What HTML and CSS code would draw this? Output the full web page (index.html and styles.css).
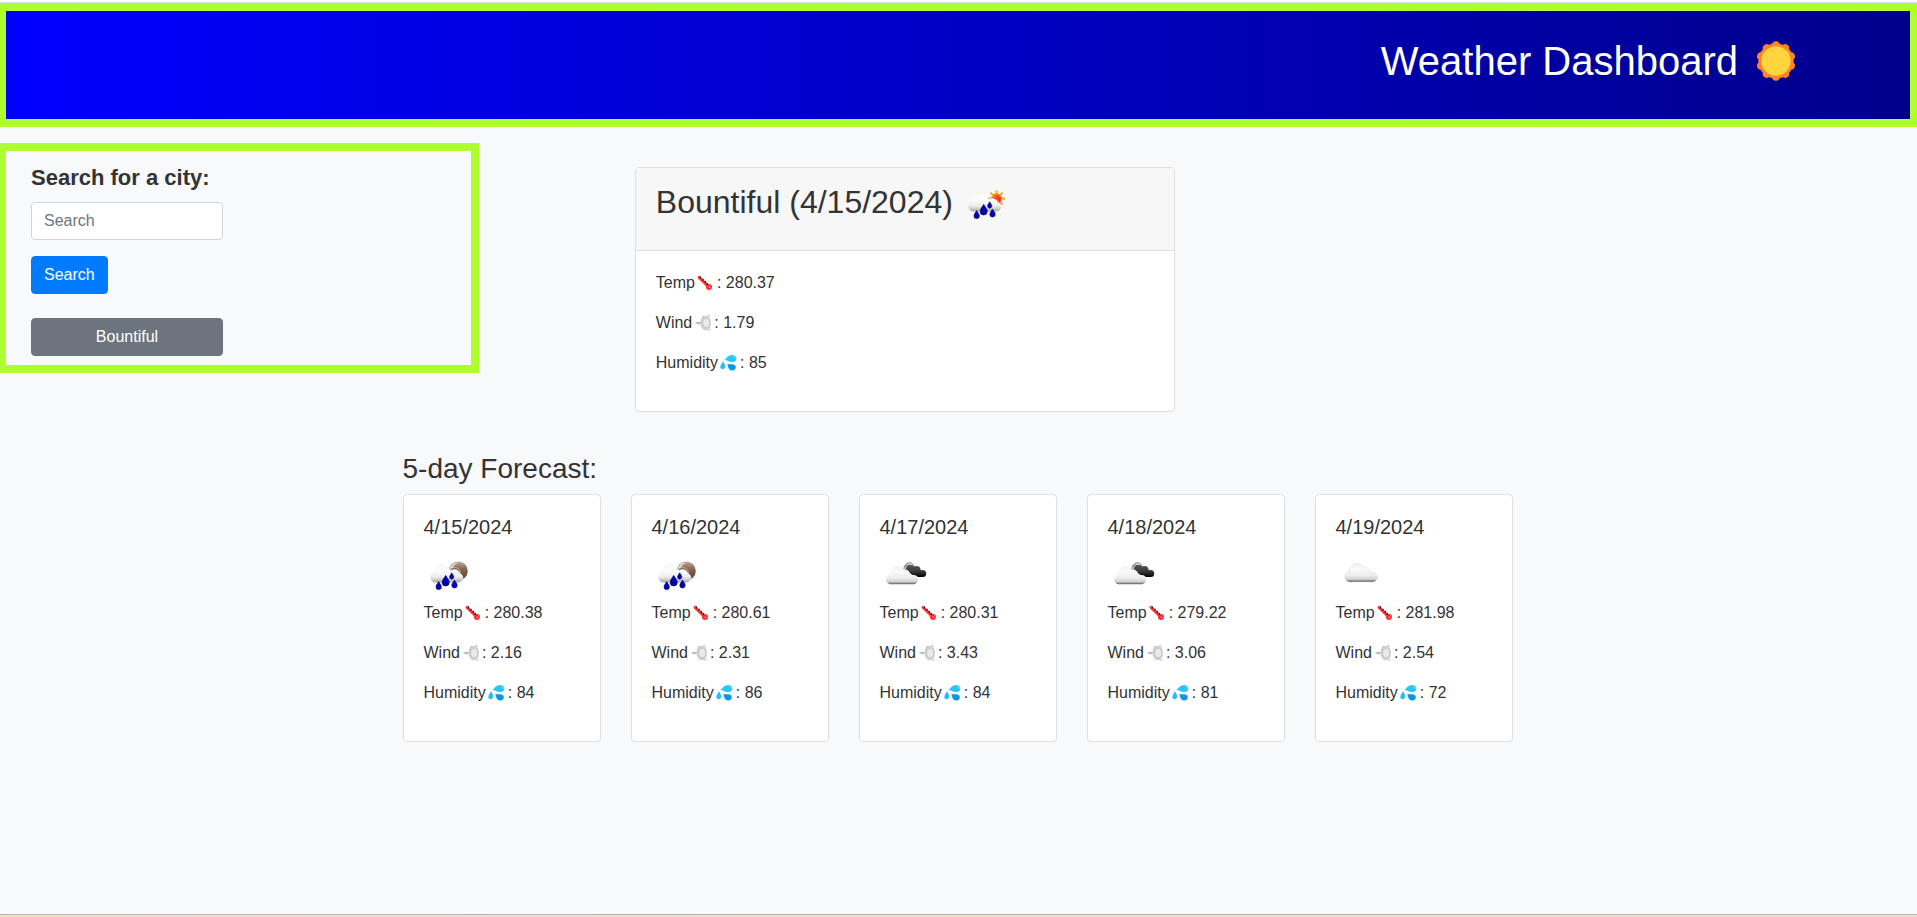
FILE: index.html
```html
<!DOCTYPE html>
<html lang="en">
<head>
<meta charset="utf-8">
<meta name="viewport" content="width=device-width, initial-scale=1">
<title>Weather Dashboard</title>
<link rel="stylesheet" href="styles.css">
</head>
<body>
<svg class="sprite" aria-hidden="true">
  <defs>
    <linearGradient id="white-cloud" gradientUnits="userSpaceOnUse" x1="0" y1="0" x2="0" y2="18.500">
      <stop offset="0" stop-color="#f1f1f1"/><stop offset=".3" stop-color="#fafafa"/><stop offset=".65" stop-color="#ededed"/><stop offset=".86" stop-color="#cfcfcf"/><stop offset=".95" stop-color="#777"/><stop offset="1" stop-color="#5a5a5a"/>
    </linearGradient>
    <linearGradient id="soft-cloud" gradientUnits="userSpaceOnUse" x1="0" y1="13" x2="0" y2="31.500">
      <stop offset="0" stop-color="#f6f6f6"/><stop offset=".35" stop-color="#fdfdfd"/><stop offset=".7" stop-color="#ededed"/><stop offset="1" stop-color="#a8a8a8"/>
    </linearGradient>
    <linearGradient id="dark-cloud" gradientUnits="userSpaceOnUse" x1="0" y1="12" x2="0" y2="26">
      <stop offset="0" stop-color="#5c5c5c"/><stop offset=".6" stop-color="#3a3a3a"/><stop offset="1" stop-color="#000"/>
    </linearGradient>
    <linearGradient id="moon" x1="0" y1="0" x2="0" y2="1">
      <stop offset="0" stop-color="#c2a896"/><stop offset=".35" stop-color="#8d6d57"/><stop offset=".7" stop-color="#6b4c38"/><stop offset="1" stop-color="#9b7f6c"/>
    </linearGradient>
    <radialGradient id="sun-core" cx=".5" cy=".7" r=".6">
      <stop offset="0" stop-color="#ff0000"/><stop offset=".6" stop-color="#ff3000"/><stop offset="1" stop-color="#ff7a00"/>
    </radialGradient>
    <path id="drop" d="M0-4C1-2 2.700-.6 2.700 1.300A2.700 2.700 0 0 1-2.700 1.300C-2.700-.6-1-2 0-4Z" fill="#0202b0" stroke="#000068" stroke-width=".6"/>
    <g id="rain">
      <g fill="url(#soft-cloud)">
        <circle cx="30.500" cy="24" r="5.800"/>
        <circle cx="34.500" cy="26.800" r="4.600"/>
        <rect x="20" y="24" width="14.500" height="7.400"/>
        <path d="M24.500 20.500A6.200 6.200 0 0 1 36.500 23" fill="none" stroke="#dadada" stroke-width=".6"/>
      </g>
      <g fill="url(#soft-cloud)">
        <circle cx="11.700" cy="26" r="5.500"/>
        <circle cx="17.500" cy="20.700" r="7.700"/>
        <circle cx="23.500" cy="22.500" r="5"/>
        <rect x="11.700" y="23" width="15" height="8.500"/>
      </g>
      <use href="#drop" transform="translate(14.700 34.600)"/>
      <use href="#drop" transform="translate(21.700 29.700) scale(1.300)"/>
      <use href="#drop" transform="translate(27.700 25) scale(.8)"/>
      <use href="#drop" transform="translate(30.500 33)"/>
    </g>
    <g id="cloud-shape">
      <circle cx="5.200" cy="13" r="5.200"/>
      <circle cx="11.500" cy="7.300" r="7"/>
      <circle cx="19" cy="8.500" r="5"/>
      <circle cx="23.500" cy="12" r="4"/>
      <circle cx="27.700" cy="13.600" r="4.600"/>
      <rect x="5.200" y="9" width="22.500" height="9.200"/>
    </g>
    <symbol id="rain-day" viewBox="0 0 50 50">
      <g stroke="#ff9b18" stroke-width="1.800"><path d="M34.500 10.500V27M26 18.700H43M28.500 12.700L40.500 24.700M40.500 12.700L28.500 24.700"/></g>
      <circle cx="34.500" cy="18.700" r="5.300" fill="url(#sun-core)" stroke="#ffb54d" stroke-width=".9"/>
      <use href="#rain"/>
    </symbol>
    <symbol id="rain-night" viewBox="0 0 50 50">
      <circle cx="34.300" cy="20" r="9.500" fill="url(#moon)"/>
      <path d="M25.600 17.500A9 9 0 0 1 35 11.700A10 10 0 0 0 28 17.500Z" fill="#f2e8e1"/>
      <use href="#rain"/>
    </symbol>
    <symbol id="broken-clouds" viewBox="0 0 50 50">
      <g fill="url(#dark-cloud)">
        <circle cx="29.500" cy="17.500" r="5"/>
        <circle cx="36.500" cy="19" r="4"/>
        <circle cx="42.700" cy="22.400" r="3.500"/>
        <path d="M27 17H37L42.700 20V25.900H33Z"/>
      </g>
      <path d="M23.700 18.500C24.500 11.500 31 9.500 34 14.500" fill="none" stroke="#777" stroke-width=".9"/>
      <path d="M25 18.500C26 14 29 12 32.500 13.800" fill="none" stroke="#fff"/>
      <use href="#cloud-shape" transform="translate(6 15)" fill="url(#white-cloud)"/>
    </symbol>
    <symbol id="cloudy" viewBox="0 0 50 50">
      <g transform="translate(9 12.500)">
        <use href="#cloud-shape" fill="none" stroke="#d6d6d6" stroke-width="1"/>
        <use href="#cloud-shape" fill="url(#white-cloud)"/>
      </g>
    </symbol>
    <symbol id="thermometer" viewBox="0 0 22 18">
      <path d="M4 3.300L13.800 12.800" stroke="#ff3b3b" stroke-width="3" stroke-linecap="round"/>
      <circle cx="14" cy="13" r="3" fill="#f92f35"/>
      <circle cx="14.500" cy="13.200" r="1" fill="#ff8080"/>
      <path d="M5.500 2.500V4.500M8 4.700V6.700M10.300 7V9M12.300 9V11" stroke="#141414" stroke-width="1.200"/>
    </symbol>
    <symbol id="wind" viewBox="0 0 22 18">
      <path d="M3.500 8.700H9.500M5 10.200L8.500 9" stroke="#b8b8b8" stroke-width="1.200"/>
      <path d="M9.500 4C11.500 1 16.500 1 17.800 4.500C19.500 7 19.200 12 17.500 14.500C16 17 11.500 16.700 10 14C8.500 12.500 8 6 9.500 4Z" fill="#cfcfcf"/>
      <ellipse cx="14.200" cy="9" rx="3.700" ry="4.700" fill="#e9e9e9" stroke="#bdbdbd" stroke-width=".7"/>
      <path d="M15.500 1.500L18 2M16.500 16.500L18.500 15.500M10 3.500L12 2" stroke="#bdbdbd"/>
    </symbol>
    <symbol id="droplets" viewBox="0 0 22 18">
      <path d="M6 6C8.500 5.500 9 1 14.500 1C20 1.500 19.500 8 14.500 8C11 8.200 9.500 6 6 6Z" fill="#26c6fa"/>
      <path d="M5 7C5.800 9 7.200 10.500 7.200 12.500C7.200 16 2 16 2.300 12.700C2.500 10.500 4.500 9 5 7Z" fill="#26bdf5"/>
      <path d="M9 10C11 10.700 17 9 17.700 12.500C18.500 16 14 18 11.500 15.500C9.500 13.500 10.700 12 9 10Z" fill="#0a96e8"/>
      <path d="M15 2.500C16.500 2.500 17.500 3.500 17.300 4.800" fill="none" stroke="#7be0ff"/>
    </symbol>
    <circle id="petal" cx="27" cy="8" r="3.800"/>
    <symbol id="sun" viewBox="0 0 54 48">
      <g fill="#ff822d">
        <circle cx="27" cy="24" r="17.700"/>
        <use href="#petal"/>
        <use href="#petal" transform="rotate(36 27 24)"/>
        <use href="#petal" transform="rotate(72 27 24)"/>
        <use href="#petal" transform="rotate(108 27 24)"/>
        <use href="#petal" transform="rotate(144 27 24)"/>
        <use href="#petal" transform="rotate(180 27 24)"/>
        <use href="#petal" transform="rotate(216 27 24)"/>
        <use href="#petal" transform="rotate(252 27 24)"/>
        <use href="#petal" transform="rotate(288 27 24)"/>
        <use href="#petal" transform="rotate(324 27 24)"/>
      </g>
      <circle cx="27" cy="24" r="14.700" fill="#ffd43c"/>
    </symbol>
  </defs>
</svg>

<header class="page-header">
  <h1 class="page-title">Weather Dashboard <svg class="title-icon" aria-hidden="true"><use href="#sun"/></svg></h1>
</header>

<main>
  <div class="top-row">
    <aside class="search-panel">
      <form class="search-form">
        <label class="search-label" for="city">Search for a city:</label>
        <input class="search-input" id="city" type="text" placeholder="Search">
        <button class="btn btn-primary" type="button">Search</button>
      </form>
      <button class="btn btn-secondary" type="button">Bountiful</button>
    </aside>
    <section class="card current">
      <div class="card-header">
        <h2 class="current-title">Bountiful (4/15/2024) <svg class="weather-icon" aria-hidden="true"><use href="#rain-day"/></svg></h2>
      </div>
      <div class="card-body">
        <p>Temp<svg class="emoji"><use href="#thermometer"/></svg>: 280.37</p>
        <p>Wind<svg class="emoji"><use href="#wind"/></svg>: 1.79</p>
        <p>Humidity<svg class="emoji"><use href="#droplets"/></svg>: 85</p>
      </div>
    </section>
  </div>

  <section class="forecast">
    <h3 class="forecast-title">5-day Forecast:</h3>
    <div class="forecast-grid">
      <article class="card card-body">
        <h4 class="day-title">4/15/2024</h4>
        <svg class="weather-icon" aria-hidden="true"><use href="#rain-night"/></svg>
        <p>Temp<svg class="emoji"><use href="#thermometer"/></svg>: 280.38</p>
        <p>Wind<svg class="emoji"><use href="#wind"/></svg>: 2.16</p>
        <p>Humidity<svg class="emoji"><use href="#droplets"/></svg>: 84</p>
      </article>
      <article class="card card-body">
        <h4 class="day-title">4/16/2024</h4>
        <svg class="weather-icon" aria-hidden="true"><use href="#rain-night"/></svg>
        <p>Temp<svg class="emoji"><use href="#thermometer"/></svg>: 280.61</p>
        <p>Wind<svg class="emoji"><use href="#wind"/></svg>: 2.31</p>
        <p>Humidity<svg class="emoji"><use href="#droplets"/></svg>: 86</p>
      </article>
      <article class="card card-body">
        <h4 class="day-title">4/17/2024</h4>
        <svg class="weather-icon" aria-hidden="true"><use href="#broken-clouds"/></svg>
        <p>Temp<svg class="emoji"><use href="#thermometer"/></svg>: 280.31</p>
        <p>Wind<svg class="emoji"><use href="#wind"/></svg>: 3.43</p>
        <p>Humidity<svg class="emoji"><use href="#droplets"/></svg>: 84</p>
      </article>
      <article class="card card-body">
        <h4 class="day-title">4/18/2024</h4>
        <svg class="weather-icon" aria-hidden="true"><use href="#broken-clouds"/></svg>
        <p>Temp<svg class="emoji"><use href="#thermometer"/></svg>: 279.22</p>
        <p>Wind<svg class="emoji"><use href="#wind"/></svg>: 3.06</p>
        <p>Humidity<svg class="emoji"><use href="#droplets"/></svg>: 81</p>
      </article>
      <article class="card card-body">
        <h4 class="day-title">4/19/2024</h4>
        <svg class="weather-icon" aria-hidden="true"><use href="#cloudy"/></svg>
        <p>Temp<svg class="emoji"><use href="#thermometer"/></svg>: 281.98</p>
        <p>Wind<svg class="emoji"><use href="#wind"/></svg>: 2.54</p>
        <p>Humidity<svg class="emoji"><use href="#droplets"/></svg>: 72</p>
      </article>
    </div>
  </section>
</main>
<div class="bottom-strip"></div>
</body>
</html>
```
FILE: styles.css
```css
*, *::before, *::after { box-sizing: border-box; }

body {
  margin: 0;
  min-height: 100vh;
  display: flex;
  flex-direction: column;
  border-top: 2px solid #fff;
  background: #f8f9fb;
  color: #333;
  font: 16px/24px "Liberation Sans", Arial, sans-serif;
}

h1, h2, h3, h4, p { margin: 0; font-weight: 400; }

main { margin-right: 2px; }

.sprite { position: absolute; width: 0; height: 0; }

.page-header {
  border: 8px solid #adff2f;
  border-left-width: 6px;
  border-right-width: 7px;
  padding: 26px 107px 34px;
  background: linear-gradient(to right, #0000ff, #00008b) padding-box;
  box-shadow: 0 -1px #dcdcea;
  margin-top: 1px;
  color: #fff;
  text-align: right;
}

.page-title {
  display: flex;
  justify-content: flex-end;
  gap: 11px;
  font-size: 40px;
  line-height: 48px;
}

.title-icon { width: 54px; height: 48px; }

.top-row {
  display: flex;
  align-items: flex-start;
  padding-top: 16px;
}

.search-panel {
  width: 25%;
  min-width: 256px;
  border: 8px solid #adff2f;
  border-left-width: 6px;
  padding: 13px 25px 9px;
}

.search-form {
  display: flex;
  flex-direction: column;
  align-items: flex-start;
  margin-bottom: 24px;
}

.search-label {
  margin-bottom: 11px;
  font-size: 22px;
  font-weight: 700;
  line-height: 27px;
}

.search-input {
  width: 192px;
  height: 38px;
  margin-bottom: 16px;
  padding: 6px 12px;
  border: 1px solid #ced4da;
  border-radius: 4px;
  background: #fff;
  color: #495057;
  font: inherit;
}

.search-input::placeholder { color: #6c757d; opacity: 1; }

.btn {
  display: block;
  padding: 6px 12px;
  border: 1px solid transparent;
  border-radius: 4px;
  color: #fff;
  font: inherit;
  cursor: pointer;
}

.btn-primary { background: #007bff; border-color: #007bff; }
.btn-secondary { width: 192px; background: #6c757d; border-color: #6c757d; }

.card {
  border: 1px solid #dfdfdf;
  border-radius: 4px;
  background: #fff;
}

.current {
  flex: 0 1 540px;
  margin: 24px 16px 0 8.15%;
}

.card-header {
  padding: 12px 20px 20px;
  border-bottom: 1px solid #dfdfdf;
  background: #f7f7f7;
}

.current-title {
  font-size: 32px;
  line-height: 38px;
}

.current-title .weather-icon { vertical-align: middle; }

.card-body { padding: 20px; }
.card-body p { margin-bottom: 16px; }

.weather-icon { width: 50px; height: 50px; }
.emoji { width: 22px; height: 18px; vertical-align: -4px; }

.forecast {
  max-width: 1140px;
  margin: 40px auto 0;
  padding: 0 15px;
}

.forecast-title {
  margin-bottom: 8px;
  font-size: 28px;
  line-height: 34px;
}

.forecast-grid {
  display: grid;
  grid-template-columns: repeat(auto-fit, minmax(190px, 1fr));
  gap: 30px;
}

.day-title {
  margin-bottom: 12px;
  font-size: 20px;
  line-height: 24px;
}

.forecast .weather-icon { display: block; }

.bottom-strip {
  height: 3px;
  margin-top: auto;
  border-top: 1px solid #b9b3b3;
  background: linear-gradient(to right, #f0e0c0, #f2dcd6 12%, #ecdfc8 50%, #eadccb);
}
```
